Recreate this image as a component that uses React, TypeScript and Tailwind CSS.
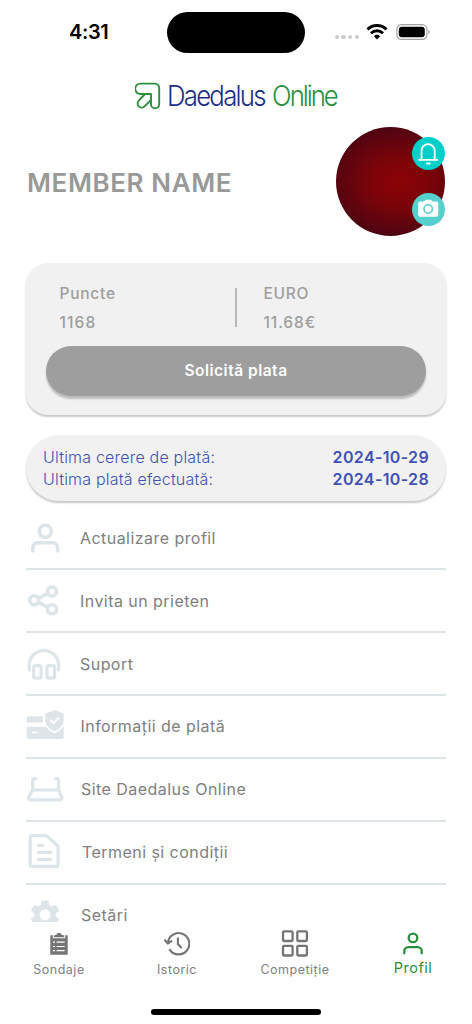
import type { ReactNode } from 'react';
import { MdSettings } from 'react-icons/md';

interface MenuItem {
  label: string;
  icon: ReactNode;
  labelClass: string;
}

const StatusBar = () => (
  <div className="flex h-16 shrink-0 items-center pl-[69px]">
    <span className="w-[98px] text-[20px] font-semibold leading-6 tracking-[-0.4px] text-black">4:31</span>
    <div className="h-[41px] w-[138px] rounded-full bg-black" />
    <div className="ml-[29.5px] mt-[10px] flex gap-[2.5px]">
      {[0, 1, 2, 3].map((dot) => (
        <span key={dot} className="size-[4.3px] rounded-full bg-[#cbcbcb]" />
      ))}
    </div>
    <svg className="ml-[7px] h-4 w-[22px]" viewBox="0 0 22 16" fill="none" stroke="#000" strokeWidth={3}>
      <path d="M1.5 5.4a13.6 13.6 0 0 1 19 0" />
      <path d="M5 9.2a8.6 8.6 0 0 1 12 0" />
      <path d="M7.9 12.2a4.5 4.5 0 0 1 6.2 0L11 15.4z" fill="#000" stroke="none" />
    </svg>
    <svg className="ml-2 h-4 w-[35px]" viewBox="0 0 35 16" fill="none">
      <rect x="0.9" y="0.7" width="30" height="14.6" rx="4.6" stroke="#a3a3a3" strokeWidth={1.2} />
      <rect x="2.8" y="2.7" width="26" height="10.6" rx="3" fill="#000" />
      <path d="M32.3 5.6v4.8c1.6-.6 2-3.9 0-4.8z" fill="#a3a3a3" />
    </svg>
  </div>
);

const Logo = () => (
  <div className="flex h-9 shrink-0 items-center pl-[134.5px] pt-0.5">
    <svg className="h-7 w-[26px] shrink-0" viewBox="0 0 26 28" fill="none" stroke="#2b8f3e" strokeWidth={1.9} strokeLinejoin="round">
      <path d="M5.4 1.6H20a4.2 4.2 0 0 1 4.2 4.2v16.4a4.1 4.1 0 0 1-8.2 0v-4.4l-6.4 6.6a4.1 4.1 0 0 1-5.8-5.8l6.3-6.6H5.4a5.2 5.2 0 0 1 0-10.4z" />
      <path d="M9.6 12h6.4v6" />
    </svg>
    <div className="ml-[6px] origin-left scale-x-[0.92] whitespace-nowrap text-[28px] font-light leading-8 tracking-[-1.9px]">
      <span className="text-[#1c2f86]">Daedalus</span>{' '}
      <span className="ml-[2px] tracking-[-2.2px] text-[#2b8f3e]">Online</span>
    </div>
  </div>
);

const Avatar = () => (
  <div className="relative mr-px size-[109.5px] rounded-full bg-[radial-gradient(ellipse_75%_58%_at_58%_50%,#8c0306_0%,#7c0408_35%,#5a0410_75%,#3c030f_100%)]">
    <div className="absolute left-[76px] top-[10.5px] flex size-[33px] items-center justify-center rounded-full bg-[#00cfca]">
      <svg className="size-6" viewBox="0 0 24 24" fill="none" stroke="#fff" strokeWidth={1.8} strokeLinecap="round">
        <path d="M5.5 17.6V8.8a6.6 6.6 0 0 1 13.2 0v8.8" />
        <path d="M3 17.8h18.2M10.8 21.5h3" />
      </svg>
    </div>
    <div className="absolute left-[76px] top-[66px] flex size-[33px] items-center justify-center rounded-full bg-[#55d0cc]">
      <svg className="size-6" viewBox="0 0 24 24" fill="#fff">
        <path d="M4.2 4.4h4l1.3-1.7h5.6l1.3 1.7h3.9a2 2 0 0 1 2 2v11.4a2 2 0 0 1-2 2H4.2a2 2 0 0 1-2-2V6.4a2 2 0 0 1 2-2z" />
        <circle cx="12.2" cy="12" r="4.2" stroke="#55d0cc" strokeWidth={1.6} />
      </svg>
    </div>
  </div>
);

const iconProps = {
  className: 'size-10 shrink-0',
  viewBox: '0 0 40 40',
  fill: 'none',
  stroke: '#dde5e9',
  strokeWidth: 3.6,
  strokeLinecap: 'round',
  strokeLinejoin: 'round',
} as const;

const menuItems: MenuItem[] = [
  {
    label: 'Actualizare profil',
    labelClass: 'ml-[14px]',
    icon: (
      <svg {...iconProps}>
        <circle cx="19.3" cy="13.3" r="6.1" />
        <path d="M6.8 33v-3.2a5 5 0 0 1 5-5h14.8a5 5 0 0 1 5 5V33" />
      </svg>
    ),
  },
  {
    label: 'Invita un prieten',
    labelClass: 'ml-[14px]',
    icon: (
      <svg {...iconProps}>
        <circle cx="8.3" cy="19.3" r="4.5" />
        <circle cx="26" cy="10.5" r="4.5" />
        <circle cx="26" cy="28.2" r="4.5" />
        <path d="M12.4 17.3l9.5-4.8M12.4 21.3l9.5 4.9" />
      </svg>
    ),
  },
  {
    label: 'Suport',
    labelClass: 'ml-[14px]',
    icon: (
      <svg {...iconProps} strokeWidth={3.2}>
        <path d="M3.2 26v-4.8a14.7 14.7 0 0 1 29.4 0V26" />
        <rect x="7.5" y="21.6" width="7.6" height="12.6" rx="2" />
        <rect x="21" y="21.6" width="7.6" height="12.6" rx="2" />
      </svg>
    ),
  },
  {
    label: 'Informații de plată',
    labelClass: 'ml-[14.5px]',
    icon: (
      <svg {...iconProps} fill="#dde5e9" stroke="none">
        <path d="M2.7 10.2H15.5a1.5 1.5 0 0 1 1.5 1.5v4.7H.7v-4.2a2 2 0 0 1 2-2z" />
        <path d="M.7 20.7h37v10.4a2 2 0 0 1-2 2h-33a2 2 0 0 1-2-2z" />
        <path d="M28.5 4l9.2 3.4v6.6c0 5.2-3.7 9.2-9.2 11.8-5.5-2.6-9.2-6.6-9.2-11.8V7.4z" stroke="#fff" strokeWidth={3} />
        <path d="M28.5 4l9.2 3.4v6.6c0 5.2-3.7 8.7-9.2 11.3-5.5-2.6-9.2-6.1-9.2-11.3V7.4z" />
        <path d="M24.7 14.3l2.9 2.8 4.9-5" fill="none" stroke="#fff" strokeWidth={2} />
        <path d="M6.2 26.5h5.4" stroke="#fff" strokeWidth={1.7} />
      </svg>
    ),
  },
  {
    label: 'Site Daedalus Online',
    labelClass: 'ml-[15px]',
    icon: (
      <svg {...iconProps} strokeWidth={3.2}>
        <path d="M9.5 9.6h-.7a2.2 2.2 0 0 0-2.2 2.2v9.2M29.7 9.6h.7a2.2 2.2 0 0 1 2.2 2.2v9.2" />
        <path d="M6.6 21h26l3.2 7.3a1.8 1.8 0 0 1-1.7 2.5H4.4a1.8 1.8 0 0 1-1.7-2.5z" />
      </svg>
    ),
  },
  {
    label: 'Termeni și condiții',
    labelClass: 'ml-4',
    icon: (
      <svg {...iconProps} strokeWidth={3.2}>
        <path d="M6 3.6h14.6l11.5 10.6v18.2a2 2 0 0 1-2 2H6.2a2 2 0 0 1-2-2V5.6a2 2 0 0 1 2-2z" />
        <path d="M12.3 13.3h4.4M12.3 20.3h12.5M12.3 27.4h12.5" />
      </svg>
    ),
  },
  {
    label: 'Setări',
    labelClass: 'ml-[15px]',
    icon: (
      <span className="mb-[13px] flex h-[27px] w-10 shrink-0 justify-center overflow-hidden pt-[2.5px] pr-[1.5px]">
        <MdSettings className="size-9 shrink-0 text-[#dde5e9]" />
      </span>
    ),
  },
];

const BottomNav = () => (
  <nav className="grid h-[101px] shrink-0 grid-cols-4 text-[12.5px] tracking-[0.5px] text-[#808080]">
    <div className="flex flex-col items-center pt-[7px]">
      <svg className="h-7 w-[26px]" viewBox="0 0 26 28" fill="#757575">
        <path d="M4.3 5.2h2.5v3h12.4v-3h2.5v19.6H4.3z" />
        <path d="M7.8 7.2V5.6l2.6-.9a2.7 2.7 0 0 1 5.2 0l2.6.9v1.6z" />
        <path d="M7 12.2h2M10.6 12.2h8M7 16.5h2M10.6 16.5h8M7 20.7h2M10.6 20.7h8" stroke="#fff" strokeWidth={1.2} />
      </svg>
      <span className="mt-[2.5px] leading-[18px]">Sondaje</span>
    </div>
    <div className="flex flex-col items-center pt-[7px]">
      <svg className="h-7 w-[26px]" viewBox="0 0 26 28" fill="none" stroke="#757575" strokeWidth={2.1} strokeLinecap="round" strokeLinejoin="round">
        <path d="M3.9 13.2A10.7 10.7 0 1 1 5.8 19.8" />
        <path d="M1 10.2l2.8 3.3 3.6-2.3" />
        <path d="M13.9 8.2v5.8l3.3 3.5" />
      </svg>
      <span className="mt-[2.5px] leading-[18px]">Istoric</span>
    </div>
    <div className="flex flex-col items-center pt-[7px]">
      <svg className="h-7 w-7" viewBox="0 0 28 28" fill="none" stroke="#757575" strokeWidth={2.3}>
        <rect x="2" y="1.4" width="9.6" height="9.6" rx="1" />
        <rect x="16.3" y="1.4" width="9.6" height="9.6" rx="1" />
        <rect x="2" y="15.9" width="9.6" height="9.6" rx="1" />
        <rect x="16.3" y="15.9" width="9.6" height="9.6" rx="1" />
      </svg>
      <span className="mt-[2.5px] leading-[18px]">Competiție</span>
    </div>
    <div className="flex flex-col items-center pt-[7px] text-[14.5px] text-[#2b8f3e]">
      <svg className="h-7 w-[26px]" viewBox="0 0 26 28" fill="none" stroke="#2b8f3e" strokeWidth={2.3} strokeLinecap="round">
        <circle cx="13" cy="7.9" r="4.3" />
        <path d="M4.3 23.3v-2.2a4 4 0 0 1 4-4h9.4a4 4 0 0 1 4 4v2.2" />
      </svg>
      <span className="mt-px leading-[18px]">Profil</span>
    </div>
  </nav>
);

export default function App() {
  return (
    <div className="flex h-[1024px] w-[472px] flex-col overflow-hidden bg-white font-['Inter',sans-serif]">
      <StatusBar />
      <div className="h-[13px] shrink-0" />
      <Logo />

      <main className="flex min-h-0 flex-1 flex-col px-[26px] pt-[13.5px]">
        <div className="flex shrink-0 items-center justify-between">
          <h1 className="pl-px pt-0.5 text-[26px] font-semibold tracking-[0.6px] text-[#999]">MEMBER NAME</h1>
          <Avatar />
        </div>

        <section className="mt-[27px] h-[151.5px] shrink-0 rounded-[22px] bg-[#f1f1f1] px-5 pt-[19px] shadow-[0_2px_2px_rgba(0,0,0,0.22)]">
          <div className="flex text-[15.5px] font-medium leading-[28.5px] tracking-[0.75px] text-[#9e9e9e]">
            <div className="-mt-[2px] h-[56px] w-[189px] pl-[13.5px]">
              <p>Puncte</p>
              <p className="tracking-[1.1px]">1168</p>
            </div>
            <div className="mt-[6px] h-[39px] w-[1.5px] bg-[#b8b8b8]" />
            <div className="-mt-[2px] h-[56px] pl-[27px]">
              <p>EURO</p>
              <p className="tracking-[0.9px]">11.68€</p>
            </div>
          </div>
          <button className="mt-[10px] flex h-[49.5px] w-full items-center justify-center rounded-full bg-[#9e9e9e] text-[15.5px] font-semibold tracking-[0.5px] text-white shadow-[0_3px_2px_rgba(0,0,0,0.22)]">
            Solicită plata
          </button>
        </section>

        <section className="mt-5 h-[66px] shrink-0 rounded-full bg-[#f1f1f1] px-[17px] pt-[11px] text-[16px] leading-[22px] text-[#3f51b5] shadow-[0_2px_2px_rgba(0,0,0,0.22)]">
          <div className="flex justify-between">
            <span className="font-light tracking-[0.2px]">Ultima cerere de plată:</span>
            <span className="font-semibold tracking-[0.35px]">2024-10-29</span>
          </div>
          <div className="flex justify-between">
            <span className="font-light tracking-[0.2px]">Ultima plată efectuată:</span>
            <span className="font-semibold tracking-[0.35px]">2024-10-28</span>
          </div>
        </section>

        <div className="mt-[7px] shrink-0">
          {menuItems.map((item) => (
            <div
              key={item.label}
              className="flex h-[62.85px] items-center border-b-2 border-[#dde5e9] text-[16px] leading-5 tracking-[0.45px] text-[#808080] last:border-transparent"
            >
              {item.icon}
              <span className={item.labelClass}>{item.label}</span>
            </div>
          ))}
        </div>
      </main>

      <BottomNav />
      <div className="absolute left-[151px] top-[1009px] h-[6px] w-[170px] rounded-full bg-black" />
    </div>
  );
}
